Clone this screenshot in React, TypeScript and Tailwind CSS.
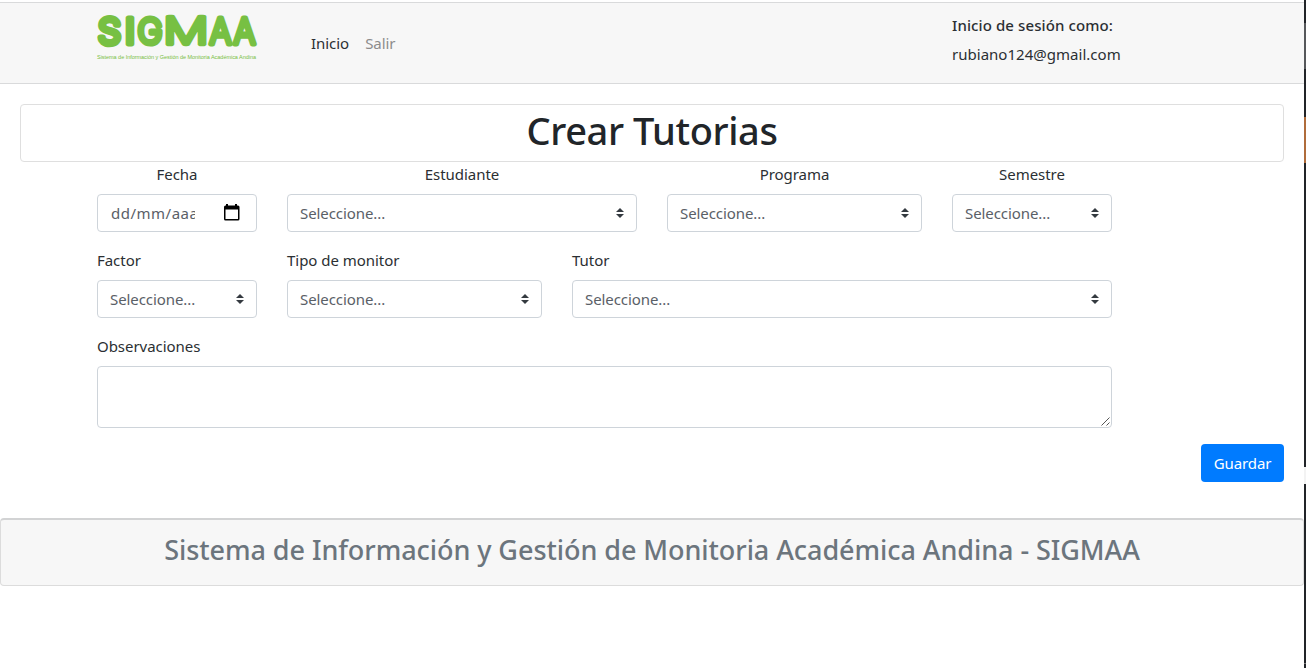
import type { ReactNode } from "react";

const logoLetters = [
  { char: "S", x: 1, width: 23, weight: 300, stroke: 5.8 },
  { char: "I", x: 28, width: 10, weight: 400, stroke: 5 },
  { char: "G", x: 40.5, width: 25, weight: 300, stroke: 5.2 },
  { char: "M", x: 66.5, width: 45, weight: 200, stroke: 4.6 },
  { char: "A", x: 112.5, width: 22, weight: 300, stroke: 5 },
  { char: "A", x: 136.5, width: 22, weight: 300, stroke: 5 },
];

function Logo() {
  return (
    <svg width="180" height="62" viewBox="0 -10 180 62" className="block overflow-visible" aria-label="SIGMAA">
      <g
        fill="#77c043"
        stroke="#77c043"
        strokeLinejoin="round"
        strokeLinecap="round"
        fontFamily="Inter, sans-serif"
        fontSize="36"
        letterSpacing="0"
      >
        {logoLetters.map((l) => (
          <text
            key={l.x}
            x={l.x}
            y="30"
            textLength={l.width}
            lengthAdjust="spacingAndGlyphs"
            fontWeight={l.weight}
            strokeWidth={l.stroke}
          >
            {l.char}
          </text>
        ))}
      </g>
      <text
        x="0"
        y="45"
        fill="#77c043"
        fontFamily="Liberation Sans, sans-serif"
        fontSize="5.5"
        textLength="159"
        lengthAdjust="spacingAndGlyphs"
      >
        Sistema de Información y Gestión de Monitoria Académica Andina
      </text>
    </svg>
  );
}

function Carets() {
  return (
    <svg width="8" height="10" viewBox="0 0 4 5" className="shrink-0">
      <path fill="#343a40" d="M2 0L0 2h4zm0 5L0 3h4z" />
    </svg>
  );
}

function Field({ label, center, width, children }: { label: string; center?: boolean; width: string; children: ReactNode }) {
  return (
    <div className={`flex flex-col gap-2 ${width}`}>
      <span className={`h-6 whitespace-nowrap leading-6 ${center ? "text-center" : ""}`}>{label}</span>
      {children}
    </div>
  );
}

function Select() {
  return (
    <div className="flex h-[38px] items-center justify-between rounded border border-[#ced4da] bg-white px-3 text-[#5a6067]">
      <span className="tracking-[-0.08px]">Seleccione...</span>
      <Carets />
    </div>
  );
}

function DateInput() {
  return (
    <div className="flex h-[38px] items-center justify-between rounded border border-[#ced4da] bg-white pr-4 pl-[13px] text-[#5a6067]">
      <span className="w-[84px] overflow-hidden whitespace-nowrap tracking-[0.5px]">dd/mm/aaaa</span>
      <svg width="17" height="18" viewBox="0 0 17 18" className="mb-0.5">
        <path fill="#000" fillRule="evenodd" d="M3 1h2v1.5h7V1h2v1.5h1A1.5 1.5 0 0 1 16.500 4v12a1.500 1.500 0 0 1-1.500 1.500H2.500A1.500 1.500 0 0 1 1 16V4a1.500 1.500 0 0 1 1.500-1.500H3zM2.500 6.500V16H15V6.500z" />
      </svg>
    </div>
  );
}

export default function App() {
  return (
    <div className="flex h-[668px] w-full overflow-hidden bg-white font-['Noto_Sans','Open_Sans',sans-serif] text-[15px] font-normal tracking-[-0.04px] text-[#2b2f33]">
      <div className="flex min-w-0 flex-1 flex-col">
        <header className="mt-0.5 flex h-[82px] shrink-0 border-y border-[#d9dadb] bg-[#f7f7f7] pl-[97px]">
          <div className="w-[214px] pt-px"><Logo /></div>
          <nav className="flex w-[641px] gap-4 pt-[28px] leading-6">
            <span>Inicio</span>
            <span className="text-[#8c8c8c]">Salir</span>
          </nav>
          <div className="pt-[10px] leading-6">
            <div className="mb-[5px] font-medium tracking-[0.1px]">Inicio de sesión como:</div>
            <div className="tracking-[0.02px]">rubiano124@gmail.com</div>
          </div>
        </header>

        <main className="flex flex-col px-5 pt-5">
          <div className="flex h-[58px] items-center justify-center rounded border border-[#dfdfdf]">
            <h1 className="pb-1.5 text-[38px] leading-[48px] font-medium tracking-[-0.4px] text-[#212529]">Crear Tutorias</h1>
          </div>
          <form className="flex w-[1092px] flex-col gap-4 pl-[77px]">
            <div className="flex gap-[30px]">
              <Field label="Fecha" center width="w-[160px]"><DateInput /></Field>
              <Field label="Estudiante" center width="w-[350px]"><Select /></Field>
              <Field label="Programa" center width="w-[255px]"><Select /></Field>
              <Field label="Semestre" center width="w-[160px]"><Select /></Field>
            </div>
            <div className="flex gap-[30px]">
              <Field label="Factor" width="w-[160px]"><Select /></Field>
              <Field label="Tipo de monitor" width="w-[255px]"><Select /></Field>
              <Field label="Tutor" width="w-[540px]"><Select /></Field>
            </div>
            <Field label="Observaciones" width="w-[1015px]">
              <div className="flex h-[62px] items-end justify-end rounded border border-[#ced4da] bg-white">
                <svg width="11" height="11" viewBox="0 0 11 11">
                  <path d="M1.500 9.500l8-8M6.500 9.500l3-3" stroke="#555" strokeWidth="1" fill="none" />
                </svg>
              </div>
            </Field>
          </form>
          <div className="mt-4 flex justify-end">
            <button type="button" className="h-[38px] w-[83px] rounded bg-[#007bff] font-normal tracking-[-0.1px] text-white">Guardar</button>
          </div>
        </main>

        <footer className="mt-9 flex h-[68px] shrink-0 justify-center rounded border border-t-2 border-[#dcdcdc] border-t-[#d2d3d4] bg-[#f7f7f7] pt-[11px]">
          <h3 className="text-[27px] leading-[38px] font-medium tracking-[-0.06px] whitespace-nowrap text-[#6c757d]">
            Sistema de Información y Gestión de Monitoria Académica Andina - SIGMAA
          </h3>
        </footer>
      </div>
      <aside className="flex w-0.5 shrink-0 flex-col bg-[#212428]">
        <div className="mt-[23px] h-[46px] bg-[#56585b]" />
        <div className="mt-12 h-[46px] bg-[#b06c3b]" />
        <div className="mt-[304px] h-[17px] bg-[#f3f3f3]" />
        <div className="mt-[179px] h-px bg-[#777]" />
      </aside>
    </div>
  );
}
